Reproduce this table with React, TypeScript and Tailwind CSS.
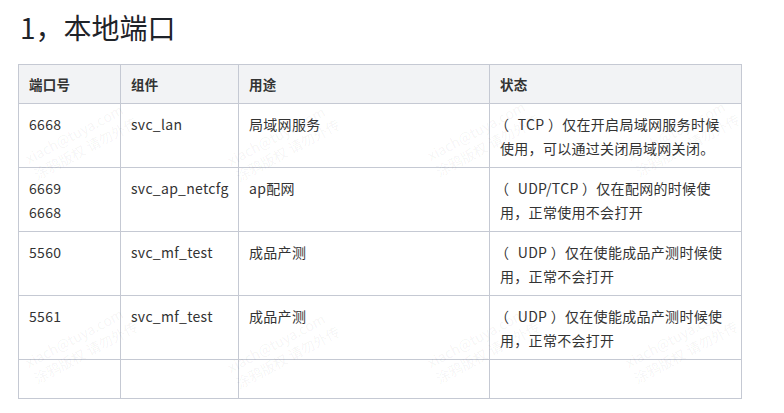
const Paren = ({ children }: { children: string }) => (
  <>
    <span className="relative -left-[5px]">（</span> {children} <span>）</span>
  </>
);

const rows: { port: string[]; comp: string; use: string; proto: string; state: string[] }[] = [
  { port: ["6668"], comp: "svc_lan", use: "局域网服务", proto: "TCP", state: ["仅在开启局域网服务时候", "使用，可以通过关闭局域网关闭。"] },
  { port: ["6669", "6668"], comp: "svc_ap_netcfg", use: "ap配网", proto: "UDP/TCP", state: ["仅在配网的时候使", "用，正常使用不会打开"] },
  { port: ["5560"], comp: "svc_mf_test", use: "成品产测", proto: "UDP", state: ["仅在使能成品产测时候使", "用，正常不会打开"] },
  { port: ["5561"], comp: "svc_mf_test", use: "成品产测", proto: "UDP", state: ["仅在使能成品产测时候使", "用，正常不会打开"] },
];

// 水印 (第一行文字基线起点附近)
const marks = [
  [22, 151], [224, 153], [424, 148], [624, 148],
  [22, 355], [224, 360], [424, 355], [622, 355],
];

const cell = "border border-[#c5c9d3] px-[10px] pt-[8px] pb-[7px] leading-6";

export default function App() {
  return (
    <div
      className="relative w-[784px] h-[413px] overflow-hidden bg-white text-[#333]"
      style={{ fontFamily: '"Noto Sans CJK SC", "Noto Sans", sans-serif' }}
    >
      <h1 className="pl-5 pt-[7px] text-[28px] leading-[40px] text-[#1f2329] font-normal">1，本地端口</h1>
      <table className="mt-[17px] ml-[18px] w-[723px] border-collapse table-fixed text-[14px] tracking-[0.3px]">
        <colgroup>
          <col className="w-[102px]" />
          <col className="w-[118px]" />
          <col className="w-[251px]" />
          <col className="w-[252px]" />
        </colgroup>
        <thead>
          <tr className="bg-[#f2f3f5] h-[39px]">
            {["端口号", "组件", "用途", "状态"].map((h) => (
              <th key={h} className="border border-[#c5c9d3] px-[10px] text-left font-bold leading-6 text-[13.5px]">
                {h}
              </th>
            ))}
          </tr>
        </thead>
        <tbody>
          {rows.map((r, i) => (
            <tr key={i} className="align-top h-[63.75px]">
              <td className={cell}>
                {r.port.map((p) => (
                  <div key={p}>{p}</div>
                ))}
              </td>
              <td className={cell}>{r.comp}</td>
              <td className={cell}>{r.use}</td>
              <td className={cell + " whitespace-nowrap"}>
                <div>
                  <Paren>{r.proto}</Paren>
                  {r.state[0]}
                </div>
                <div>{r.state[1]}</div>
              </td>
            </tr>
          ))}
          <tr className="h-[39px]">
            <td className="border border-[#c5c9d3]" />
            <td className="border border-[#c5c9d3]" />
            <td className="border border-[#c5c9d3]" />
            <td className="border border-[#c5c9d3]" />
          </tr>
        </tbody>
      </table>
      {marks.map(([x, y], i) => (
        <div
          key={i}
          className="pointer-events-none absolute origin-top-left -rotate-[28deg] text-[14px] leading-[18px] text-black/[0.05] whitespace-nowrap"
          style={{ left: x, top: y }}
        >
          <div>xiach@tuya.com</div>
          <div>涂鸦版权 请勿外传</div>
        </div>
      ))}
    </div>
  );
}
